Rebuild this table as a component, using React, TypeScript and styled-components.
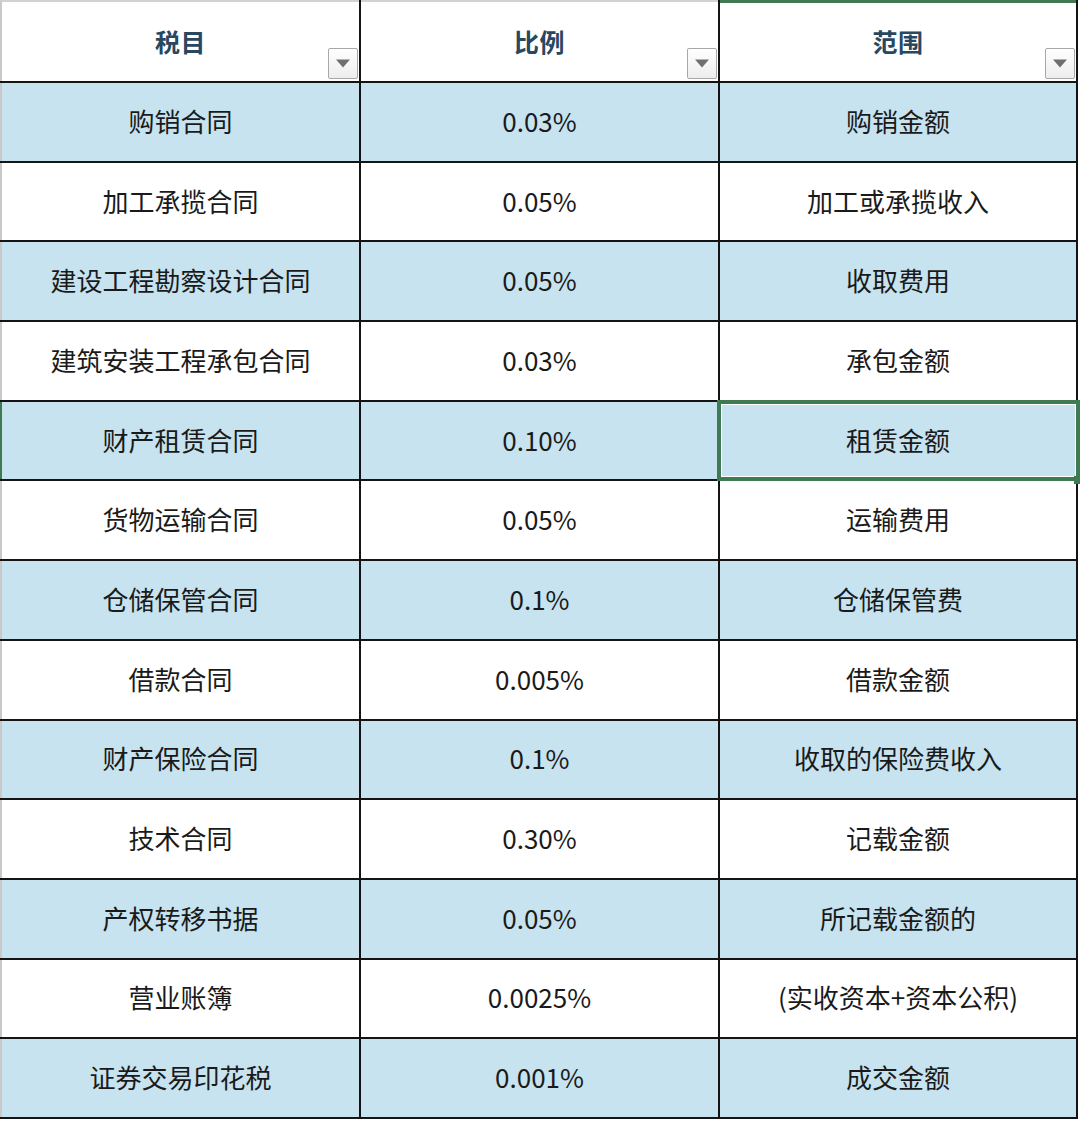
import React from 'react';
import styled, { createGlobalStyle, css } from 'styled-components';

const GlobalStyle = createGlobalStyle`
  html, body {
    margin: 0;
    padding: 0;
    background: #ffffff;
  }
  body {
    font-family: "Noto Sans CJK SC", "Noto Sans", "Liberation Sans", sans-serif;
  }
`;

const GREEN = '#3f7a52';
const LINE = '#141414';

const Sheet = styled.div`
  display: grid;
  grid-template-columns: 359px 357px 356px;
  grid-template-rows: 81px repeat(13, 77.7px);
  gap: 2px;
  width: fit-content;
  padding: 0 2px 2px 0;
  background: ${LINE};
`;

const HeaderCell = styled.div<{ $first?: boolean; $active?: boolean }>`
  position: relative;
  display: flex;
  align-items: center;
  justify-content: center;
  padding-bottom: 2px;
  box-sizing: border-box;
  background: #ffffff;
  border-top: 2px solid #d2d2d2;
  ${({ $first }) => $first && css`border-left: 2px solid #c9c9c9;`}
  ${({ $active }) => $active && css`border-top: 3px solid ${GREEN};`}
  color: #284760;
  font-size: 25px;
  font-weight: 700;
  letter-spacing: 0.5px;
`;

const FilterButton = styled.div`
  position: absolute;
  right: 1px;
  bottom: 2px;
  width: 30px;
  height: 31px;
  box-sizing: border-box;
  border: 1px solid #a8a8a8;
  border-radius: 2px;
  background: linear-gradient(#ffffff, #ededed);
  display: flex;
  align-items: center;
  justify-content: center;
`;

const Cell = styled.div<{ $shaded: boolean; $first?: boolean; $rowActive?: boolean; $selected?: boolean }>`
  position: relative;
  display: flex;
  align-items: center;
  justify-content: center;
  padding-bottom: 3px;
  box-sizing: border-box;
  background: ${({ $shaded }) => ($shaded ? '#c6e3ef' : '#ffffff')};
  color: #1a1a1a;
  font-size: 26px;
  font-weight: 400;
  white-space: nowrap;
  ${({ $first, $rowActive }) =>
    $first && css`border-left: 2px solid ${$rowActive ? GREEN : '#c9c9c9'};`}
  ${({ $selected }) =>
    $selected &&
    css`
      z-index: 1;
      &::after {
        content: '';
        position: absolute;
        inset: -2px -4px -2px -3px;
        border: 4px solid ${GREEN};
        box-shadow: inset 0 0 0 1px #ffffff;
        pointer-events: none;
      }
      &::before {
        content: '';
        position: absolute;
        right: -4px;
        bottom: -5px;
        width: 6px;
        height: 8px;
        background: ${GREEN};
        z-index: 2;
      }
    `}
`;

const rows: [string, string, string][] = [
  ['购销合同', '0.03%', '购销金额'],
  ['加工承揽合同', '0.05%', '加工或承揽收入'],
  ['建设工程勘察设计合同', '0.05%', '收取费用'],
  ['建筑安装工程承包合同', '0.03%', '承包金额'],
  ['财产租赁合同', '0.10%', '租赁金额'],
  ['货物运输合同', '0.05%', '运输费用'],
  ['仓储保管合同', '0.1%', '仓储保管费'],
  ['借款合同', '0.005%', '借款金额'],
  ['财产保险合同', '0.1%', '收取的保险费收入'],
  ['技术合同', '0.30%', '记载金额'],
  ['产权转移书据', '0.05%', '所记载金额的'],
  ['营业账簿', '0.0025%', '(实收资本+资本公积)'],
  ['证券交易印花税', '0.001%', '成交金额'],
];

const Caret = () => (
  <svg width="16" height="9" viewBox="0 0 16 9">
    <path d="M1 0.5 L15 0.5 L8 8.5 Z" fill="#6f6f6f" />
  </svg>
);

const headers = ['税目', '比例', '范围'];

const App: React.FC = () => (
  <>
    <GlobalStyle />
    <Sheet>
      {headers.map((h, i) => (
        <HeaderCell key={h} $first={i === 0} $active={i === 2}>
          {h}
          <FilterButton>
            <Caret />
          </FilterButton>
        </HeaderCell>
      ))}
      {rows.map((row, r) =>
        row.map((text, c) => (
          <Cell
            key={`${r}-${c}`}
            $shaded={r % 2 === 0}
            $first={c === 0}
            $rowActive={r === 4}
            $selected={r === 4 && c === 2}
          >
            {text}
          </Cell>
        ))
      )}
    </Sheet>
  </>
);

export default App;
